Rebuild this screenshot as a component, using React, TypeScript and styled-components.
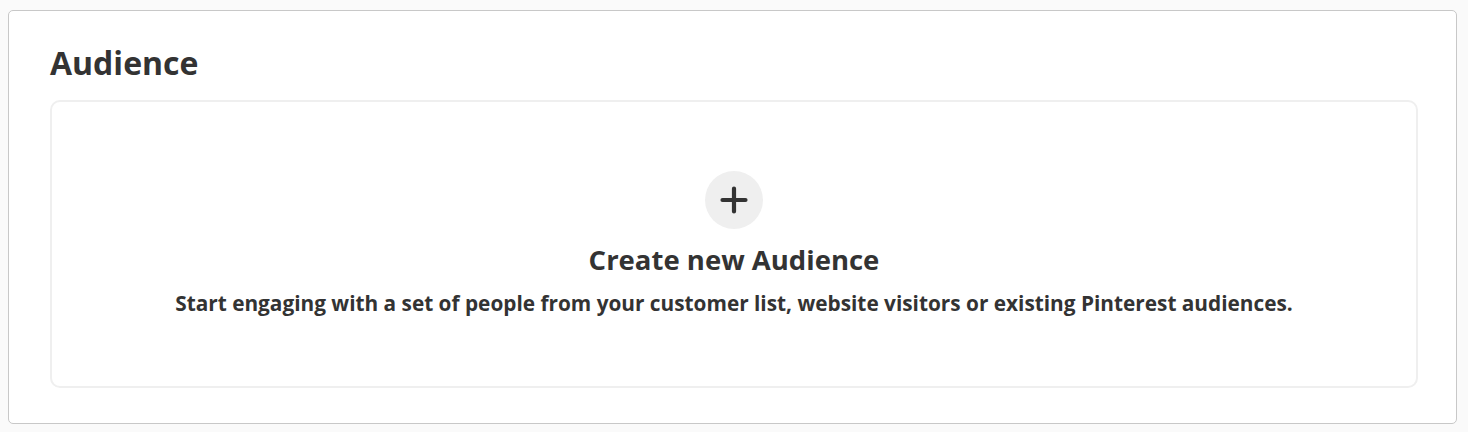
import React from "react";
import styled, { createGlobalStyle } from "styled-components";

const Global = createGlobalStyle`
  html, body { margin: 0; padding: 0; background: #fafafa; }
  body { font-family: "Open Sans", "Noto Sans", Arial, sans-serif; color: #333; }
`;

const Page = styled.div`
  padding: 10px 11px 8px 8px;
  box-sizing: border-box;
  height: 432px;
`;

const Card = styled.section`
  background: #fff;
  border: 1px solid #c8c8c8;
  border-radius: 5px;
  box-sizing: border-box;
  height: 414px;
  padding: 32px 38px 35px 41px;
  display: flex;
  flex-direction: column;
  gap: 17px;
`;

const Title = styled.h2`
  margin: 0;
  font-size: 32px;
  line-height: 40px;
  font-weight: 700;
  color: #333;
`;

const Empty = styled.div`
  flex: 1;
  border: 2px solid #efefef;
  border-radius: 10px;
  display: flex;
  flex-direction: column;
  align-items: center;
  justify-content: center;
`;

const IconCircle = styled.div`
  width: 58px;
  height: 58px;
  border-radius: 50%;
  background: #efefef;
  display: flex;
  align-items: center;
  justify-content: center;
  margin-bottom: 13px;
`;

const Heading = styled.h3`
  margin: 0;
  font-size: 27.5px;
  line-height: 36px;
  font-weight: 700;
  color: #333;
`;

const Description = styled.p`
  margin: 11px 0 0;
  font-size: 20.8px;
  line-height: 28px;
  font-weight: 700;
  color: #333;
  white-space: nowrap;
`;

export default function App() {
  return (
    <>
      <Global />
      <Page>
        <Card>
          <Title>Audience</Title>
          <Empty>
            <IconCircle>
              <svg width="28" height="28" viewBox="0 0 28 28">
                <path d="M14 2.5v23M2.5 14h23" stroke="#333" strokeWidth="4.2" strokeLinecap="round" />
              </svg>
            </IconCircle>
            <Heading>Create new Audience</Heading>
            <Description>
              Start engaging with a set of people from your customer list, website visitors or existing Pinterest audiences.
            </Description>
          </Empty>
        </Card>
      </Page>
    </>
  );
}
